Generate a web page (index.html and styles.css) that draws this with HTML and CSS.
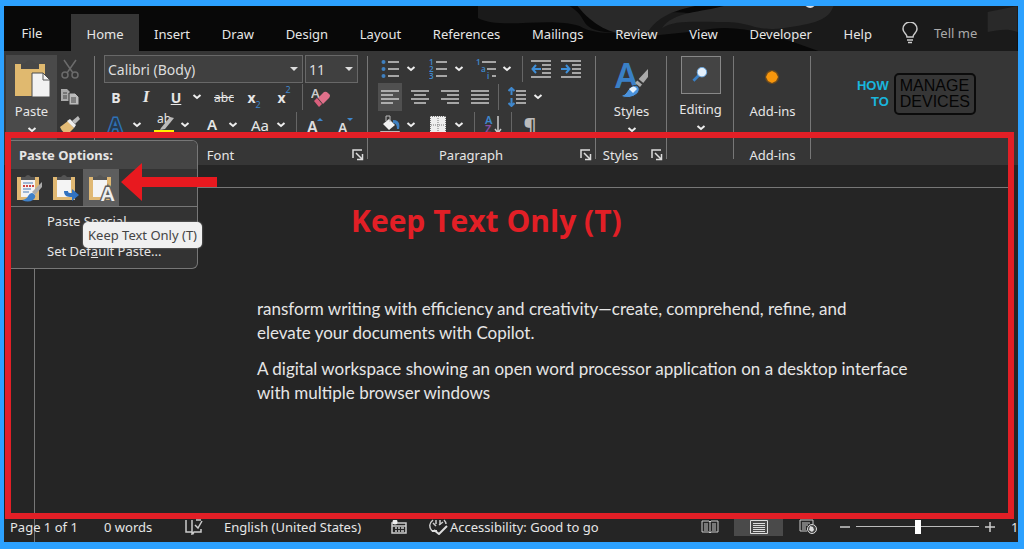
FILE: index.html
```
<!DOCTYPE html>
<html lang="en">
<head>
  <meta charset="UTF-8">
  <meta name="viewport" content="width=device-width, initial-scale=1.0">
  <title>Keep Text Only</title>
  <link rel="stylesheet" href="styles.css">
</head>
<body>
  <svg class="defs" width="0" height="0" aria-hidden="true">
    <symbol id="chev" viewBox="0 0 10 6"><path d="M1.5 1l3.5 3 3.5-3" fill="none" stroke="#eee" stroke-width="2"/></symbol>
    <symbol id="launch" viewBox="0 0 12 12"><path d="M1 9V1h9M4 4l6 6M10.500 5v5.500H5" fill="none" stroke="#ddd" stroke-width="1.500"/></symbol>
    <symbol id="clip" viewBox="0 0 28 28">
      <path d="M2 3h22v23H2z" fill="#e0b873"/><path d="M6 6h14v17H6z" fill="#f4f4f4"/><path d="M6 6V3h4q3-4 6 0h4v3z" fill="#555"/>
    </symbol>
  </svg>

  <div class="app">
    <header class="tabs">
      <svg class="art" viewBox="0 0 550 45" preserveAspectRatio="none" aria-hidden="true">
        <path d="M8 0h92c20 12 8 22 36 26 30 4 38-10 50-14 20-14 50 2 90 2 30 0 60-8 62-14h212v45H350c-40-14-80-30-120-20l-50 5c-20-6-50 2-70-10C80 10 30 24 8 12z" fill="#1a1a1a"/>
        <path d="M108 0h118c-30 6-40 16-46 24-20 10-50 4-72-24zM275 0h90c-4 14-20 18-50 22-30 4-30-6-60-6-30 0-50-2-62 6 10-16 40-16 62-22zM520 6l30-6v26c-10-4-20-2-30 0z" fill="#292929"/>
        <path d="M337 0q5 4 9 0z" fill="#ddd"/>
      </svg>
      <button class="tab file">File</button>
      <button class="tab active">Home</button>
      <nav>
        <button class="tab">Insert</button>
        <button class="tab">Draw</button>
        <button class="tab">Design</button>
        <button class="tab">Layout</button>
        <button class="tab">References</button>
        <button class="tab">Mailings</button>
        <button class="tab">Review</button>
        <button class="tab">View</button>
        <button class="tab">Developer</button>
        <button class="tab">Help</button>
      </nav>
      <button class="tell">
        <svg width="16" height="22" viewBox="0 0 16 22"><path d="M5 15c0-3-4-4-4-8a7 7 0 0 1 14 0c0 4-4 5-4 8zM5 18h6M6 20.500h4" fill="none" stroke="#ccc" stroke-width="1.500"/></svg>
        <span>Tell me</span>
      </button>
    </header>

    <section class="ribbon">
      <div class="group clipboard">
        <button class="big paste">
          <svg width="36" height="38" viewBox="0 0 36 38"><path d="M1 4h30v32H1z" fill="#e0b96f"/><path d="M7 9V3h4q5-6 10 0h4v6z" fill="#474747"/><path d="M18 13h11l7 7v17H18z" fill="#f2f2f2" stroke="#4a4a4a"/><path d="M29 13v7h7" fill="none" stroke="#555"/></svg>
          <span>Paste</span>
          <svg width="10" height="6"><use href="#chev"/></svg>
        </button>
        <div class="side">
          <button class="btn" aria-label="Cut"><svg width="18" height="20" viewBox="0 0 18 20" fill="none" stroke="#6b6b6b" stroke-width="1.500"><path d="M3 1l9 13M15 1L6 14"/><circle cx="4" cy="16" r="3"/><circle cx="14" cy="16" r="3"/></svg></button>
          <button class="btn" aria-label="Copy"><svg width="18" height="16" viewBox="0 0 18 16"><path d="M0 0h6l3 3v9H0z" fill="#aaa"/><path d="M8 4h6l4 4v8H8z" fill="#bbb" stroke="#363636"/><path d="M2 4h4M2 7h4M2 9h4M10 9h5M10 11h5M10 13h5" stroke="#444"/></svg></button>
          <button class="btn" aria-label="Format Painter"><svg width="20" height="18" viewBox="0 0 20 18"><path d="M0 11l8-6 6 7-6 6q-5 0-8-7z" fill="#e3bb76"/><path d="M7 5l3-2 6 6-2 3z" fill="#eee"/><path d="M12 5l6-5 2 3-5 5z" fill="#bbb"/></svg></button>
        </div>
      </div>

      <div class="group font">
        <div class="row">
          <div class="combo wide"><select aria-label="Font"><option>Calibri (Body)</option></select></div>
          <div class="combo"><select aria-label="Font size"><option>11</option></select></div>
        </div>
        <div class="row">
          <button class="btn"><b>B</b></button>
          <button class="btn italic">I</button>
          <div class="split"><button class="btn"><b><u>U</u></b></button><button class="drop" aria-label="Underline options"><svg width="10" height="6"><use href="#chev"/></svg></button></div>
          <button class="btn strike">abc</button>
          <button class="btn"><b>x</b><sub>2</sub></button>
          <button class="btn"><b>x</b><sup>2</sup></button>
          <i class="sep"></i>
          <button class="btn" aria-label="Clear formatting"><svg width="20" height="20" viewBox="0 0 20 20"><text x="0" y="11" class="glyph" font-size="13" fill="#ccc">A</text><path d="M7 11l6-6q2-1 4 1l2 2q0 2-1 3l-6 6z" fill="#e0708a"/><path d="M3 14l3-3 5 6-3 3z" fill="#d95f7c"/></svg></button>
        </div>
        <div class="row">
          <div class="split"><button class="btn" aria-label="Text effects"><svg width="20" height="20" viewBox="0 0 20 20"><text x="3" y="17" class="glyph" font-size="19" fill="#26394d" stroke="#2f71b5" stroke-width="3" paint-order="stroke">A</text></svg></button><button class="drop" aria-label="Text effect options"><svg width="10" height="6"><use href="#chev"/></svg></button></div>
          <div class="split"><button class="btn mark">ab<svg width="20" height="18" viewBox="0 0 20 18"><path d="M7 12l9-11 4 1-9 11-5 1z" fill="#bbb"/><path d="M0 14h20v3H0z" fill="#fff000"/></svg></button><button class="drop" aria-label="Highlight options"><svg width="10" height="6"><use href="#chev"/></svg></button></div>
          <div class="split"><button class="btn color">A</button><button class="drop" aria-label="Font color options"><svg width="10" height="6"><use href="#chev"/></svg></button></div>
          <div class="split"><button class="btn case">Aa</button><button class="drop" aria-label="Case options"><svg width="10" height="6"><use href="#chev"/></svg></button></div>
          <i class="sep"></i>
          <button class="btn" aria-label="Grow font"><svg width="20" height="20" viewBox="0 0 20 20"><text x="2" y="18" class="glyph" font-size="16" fill="#ddd">A</text><path d="M12 6l3-3 3 3z" fill="#3f87cc"/></svg></button>
          <button class="btn" aria-label="Shrink font"><svg width="20" height="20" viewBox="0 0 20 20"><text x="3" y="18" class="glyph" font-size="14" fill="#ddd">A</text><path d="M12 3h6l-3 3z" fill="#3f87cc"/></svg></button>
        </div>
        <div class="label"><span>Font</span><button class="more" aria-label="Font settings"><svg width="12" height="12"><use href="#launch"/></svg></button></div>
      </div>

      <div class="group paragraph">
        <div class="row">
          <div class="split"><button class="btn" aria-label="Bullets"><svg width="18" height="20" viewBox="0 0 18 20"><path d="M7 3h11M7 10h11M7 17h11" stroke="#ccc" stroke-width="1.500"/><g fill="#3f80c0"><circle cx="2.500" cy="3" r="2"/><circle cx="2.500" cy="10" r="2"/><circle cx="2.500" cy="17" r="2"/></g></svg></button><button class="drop" aria-label="Bullet options"><svg width="10" height="6"><use href="#chev"/></svg></button></div>
          <div class="split"><button class="btn" aria-label="Numbering"><svg width="18" height="20" viewBox="0 0 18 20"><path d="M7 3h11M7 10h11M7 17h11" stroke="#ccc" stroke-width="1.500"/><g class="glyph" font-size="8" fill="#3f87cc"><text x="0" y="6">1</text><text x="0" y="13">2</text><text x="0" y="20">3</text></g></svg></button><button class="drop" aria-label="Numbering options"><svg width="10" height="6"><use href="#chev"/></svg></button></div>
          <div class="split"><button class="btn" aria-label="Multilevel list"><svg width="20" height="20" viewBox="0 0 20 20"><path d="M6 3h14M11 10h9M16 17h4" stroke="#ccc" stroke-width="1.500"/><g class="glyph" font-size="8" fill="#3f87cc"><text x="0" y="6">1</text><text x="5" y="13">a</text><text x="11" y="20">i</text></g></svg></button><button class="drop" aria-label="Multilevel options"><svg width="10" height="6"><use href="#chev"/></svg></button></div>
          <i class="sep"></i>
          <button class="btn" aria-label="Decrease indent"><svg width="20" height="18" viewBox="0 0 20 18"><path d="M0 1h20M11 5h9M11 9h9M11 13h9M0 17h20" stroke="#ccc" stroke-width="1.500"/><path d="M10 9H2M5 5L1.500 9 5 13" fill="none" stroke="#3f8fd8" stroke-width="2"/></svg></button>
          <button class="btn" aria-label="Increase indent"><svg width="20" height="18" viewBox="0 0 20 18"><path d="M0 1h20M11 5h9M11 9h9M11 13h9M0 17h20" stroke="#ccc" stroke-width="1.500"/><path d="M0 9h8M5 5l3.500 4L5 13" fill="none" stroke="#3f8fd8" stroke-width="2"/></svg></button>
        </div>
        <div class="row">
          <button class="btn on" aria-label="Align left"><svg width="18" height="14" viewBox="0 0 18 14"><path d="M0 1h18M0 5h12M0 9h18M0 13h12" stroke="#ccc" stroke-width="1.500"/></svg></button>
          <button class="btn" aria-label="Center"><svg width="18" height="14" viewBox="0 0 18 14"><path d="M0 1h18M3 5h12M0 9h18M3 13h12" stroke="#ccc" stroke-width="1.500"/></svg></button>
          <button class="btn" aria-label="Align right"><svg width="18" height="14" viewBox="0 0 18 14"><path d="M0 1h18M6 5h12M0 9h18M6 13h12" stroke="#ccc" stroke-width="1.500"/></svg></button>
          <button class="btn" aria-label="Justify"><svg width="18" height="14" viewBox="0 0 18 14"><path d="M0 1h18M0 5h18M0 9h18M0 13h18" stroke="#ccc" stroke-width="1.500"/></svg></button>
          <i class="sep"></i>
          <div class="split"><button class="btn" aria-label="Line spacing"><svg width="18" height="20" viewBox="0 0 18 20"><path d="M8 4h10M8 8h10M8 12h10M8 16h10" stroke="#ccc" stroke-width="1.500"/><path d="M3.500 1v7M.500 4l3-3 3 3M3.500 11v8M.500 16l3 3 3-3" fill="none" stroke="#3f87cc" stroke-width="2"/></svg></button><button class="drop" aria-label="Spacing options"><svg width="10" height="6"><use href="#chev"/></svg></button></div>
        </div>
        <div class="row">
          <div class="split"><button class="btn" aria-label="Shading"><svg width="20" height="20" viewBox="0 0 20 20"><path d="M3 9l6-5 6 6-6 5z" fill="#f2f2f2"/><path d="M6 6V1h4v6" fill="none" stroke="#bbb"/><path d="M13 5q8 0 6 9h-2q0-6-4-6z" fill="#3f80c0"/><path d="M.500 19v-2.500h19V19" fill="none" stroke="#bbb"/></svg></button><button class="drop" aria-label="Shading options"><svg width="10" height="6"><use href="#chev"/></svg></button></div>
          <div class="split"><button class="btn" aria-label="Borders"><svg width="16" height="18" viewBox="0 0 16 18"><path d="M0 0h16v18H0z" fill="#eee"/><path d="M0 .500h16M.500 0v18M15.500 0v18M8 2v14M1 9h14" stroke="#777" stroke-dasharray="1 1"/></svg></button><button class="drop" aria-label="Border options"><svg width="10" height="6"><use href="#chev"/></svg></button></div>
          <i class="sep"></i>
          <button class="btn" aria-label="Sort"><svg width="18" height="20" viewBox="0 0 18 20"><text x="1" y="9" class="glyph" font-size="11" fill="#3f87cc">A</text><text x="1" y="18" class="glyph" font-size="11" fill="#8a4fa8">Z</text><path d="M14 1v16M11 14l3 4 3-4" fill="none" stroke="#ccc" stroke-width="1.500"/></svg></button>
          <i class="sep"></i>
          <button class="btn pilcrow" aria-label="Show marks">¶</button>
        </div>
        <div class="label"><span>Paragraph</span><button class="more" aria-label="Paragraph settings"><svg width="12" height="12"><use href="#launch"/></svg></button></div>
      </div>

      <div class="group styles">
        <button class="big">
          <svg width="36" height="38" viewBox="0 0 36 38"><text x="1" y="28" class="glyph" font-size="34" fill="#3a80c6">A</text><path d="M34 9v8l-8 10-5-4z" fill="#aaa"/><path d="M23 19l6 5" stroke="#363636" stroke-width="2"/><path d="M6 36q6-1 8-6 4-6 10-4 3 4-1 8-7 6-17 2z" fill="#4a92dc" stroke="#363636"/><path d="M15 29q5-5 8 0l-4 4z" fill="#e6f1fc"/></svg>
          <span>Styles</span>
          <svg width="10" height="6"><use href="#chev"/></svg>
        </button>
        <div class="label"><span>Styles</span><button class="more" aria-label="Style settings"><svg width="12" height="12"><use href="#launch"/></svg></button></div>
      </div>

      <div class="group editing">
        <button class="big">
          <svg class="find" width="40" height="38" viewBox="0 0 40 38"><path d="M12 25l7-7" stroke="#3a80c6" stroke-width="3"/><circle cx="21" cy="16" r="5" fill="#e4f0fc" stroke="#6aa6df" stroke-width="1"/></svg>
          <span>Editing</span>
          <svg width="10" height="6"><use href="#chev"/></svg>
        </button>
      </div>

      <div class="group addins">
        <button class="big">
          <svg width="36" height="38" viewBox="0 0 36 38"><circle cx="17" cy="17" r="7" fill="#6b4a1e"/><path d="M17 11l4 2 2 4-2 4-4 2-4-2-2-4 2-4z" fill="#f7960c"/></svg>
          <span>Add-ins</span>
        </button>
        <div class="label"><span>Add-ins</span></div>
      </div>

      <div class="logo">
        <div class="howto">HOW<br>TO</div>
        <div class="devices">MANAGE<br>DEVICES</div>
      </div>
    </section>

    <main class="workspace">
      <article class="page">
        <p>ransform writing with efficiency and creativity—create, comprehend, refine, and<br>elevate your documents with Copilot.</p>
        <p>A digital workspace showing an open word processor application on a desktop interface with multiple browser windows</p>
      </article>

      <footer class="status">
        <span class="pages">Page 1 of 1</span>
        <span class="words">0 words</span>
        <svg class="proof" width="18" height="16" viewBox="0 0 18 16"><path d="M7 13H1V1M7 1v14l2-2h7v-3M7 13l2 2M10 6l3 3 4-7M11 1h5" fill="none" stroke="#ccc" stroke-width="1.500"/></svg>
        <span class="lang">English (United States)</span>
        <svg class="macro" width="16" height="14" viewBox="0 0 16 14"><path d="M1 3h14v10H1zM1 6h14M4 8h2M7 8h2M10 8h3M4 11h2M7 11h2M10 11h3" fill="none" stroke="#ccc" stroke-width="1.500"/><circle cx="4" cy="2" r="2.500" fill="#eee"/></svg>
        <svg class="access" width="20" height="16" viewBox="0 0 20 16"><path d="M5 1Q-1 6 4 12M8 1v4M5 4l3 3M12 1v5M15 3l-4 3M16 1q2 2 2 4" fill="none" stroke="#ccc" stroke-width="1.500"/><path d="M6 11l5 4 8-8M4 12h5" fill="none" stroke="#ddd" stroke-width="2"/></svg>
        <span>Accessibility: Good to go</span>
        <div class="views">
          <button aria-label="Read mode"><svg width="18" height="14" viewBox="0 0 18 14"><path d="M1 1h7l1 1 1-1h7v11h-7l-1 1-1-1H1zM9 2v11M3 4h4M3 6h4M3 8h4M3 10h4M11 4h4M11 6h4M11 8h4M11 10h4" fill="none" stroke="#ccc"/></svg></button>
          <button class="on" aria-label="Print layout"><svg width="18" height="16" viewBox="0 0 18 16"><path d="M.500 1.500h17v13H.500zM3 4.500h12M3 6.500h12M3 8.500h12M3 10.500h12M3 12.500h12" fill="none" stroke="#ddd"/></svg></button>
          <button aria-label="Web layout"><svg width="18" height="16" viewBox="0 0 18 16"><path d="M8 12H1V1h13v4M3 4h8M3 6h6M3 8h4M3 10h4" fill="none" stroke="#ccc"/><circle cx="13" cy="10" r="4.500" fill="#444" stroke="#ddd"/><path d="M11 7l3 1 1 3-2 2-3-2z" fill="#ddd"/></svg></button>
        </div>
        <button class="zoom-btn" aria-label="Zoom out"><svg width="10" height="10" viewBox="0 0 10 10"><path d="M0 5h10" stroke="#ccc" stroke-width="1.500"/></svg></button>
        <input class="zoom" type="range" aria-label="Zoom" value="50">
        <button class="zoom-btn" aria-label="Zoom in"><svg width="10" height="10" viewBox="0 0 10 10"><path d="M0 5h10M5 0v10" stroke="#ccc" stroke-width="1.500"/></svg></button>
        <span class="percent">1</span>
      </footer>
    </main>

    <div class="frame"></div>

    <div class="menu">
      <h2>Paste Options:</h2>
      <div class="options">
        <button aria-label="Keep Source Formatting"><svg width="28" height="28"><use href="#clip"/><path d="M8 9h10M8 15h8M8 18h6" stroke="#4a7cb5"/><path d="M8 12h11" stroke="#c44" stroke-width="2" stroke-dasharray="2 1"/><path d="M27 8l-10 10 3 3 7-8z" fill="#aaa"/><path d="M7 26q5-1 6-4 3-5 6-2 3 3-1 6-5 3-11 0z" fill="#3f80c8"/></svg></button>
        <button aria-label="Merge Formatting"><svg width="28" height="28"><use href="#clip"/><path d="M13 17c0 5 3 6 8 6v4l7-6-7-6v4c-3 0-4 0-4-2z" fill="#3272c0"/></svg></button>
        <button class="on" aria-label="Keep Text Only"><svg width="28" height="28"><use href="#clip"/><text x="14" y="27" class="glyph" font-size="20" fill="#eee" stroke="#5e5e5e" stroke-width="3" paint-order="stroke">A</text></svg></button>
      </div>
      <button class="item">Paste Special...</button>
      <button class="item">Set Def<u>a</u>ult Paste...</button>
    </div>
    <div class="tooltip" role="tooltip">Keep Text Only (T)</div>
    <svg class="arrow" width="96" height="40" viewBox="0 0 96 40" aria-hidden="true"><path d="M0 20L21 1v14h75v10H21v14z" fill="#e8191f"/></svg>
    <div class="callout">Keep Text Only (T)</div>
  </div>
</body>
</html>
```
FILE: styles.css
```
* {
  box-sizing: border-box;
}
body {
  margin: 0;
  height: 100vh;
  padding: 6px 6px 7px 4px;
  background: #2ca1ff;
  color: #e6e6e6;
  font-family: "Noto Sans", "Open Sans", sans-serif;
  font-size: 13px;
}
button {
  padding: 0;
  border: 0;
  background: none;
  color: inherit;
  font: inherit;
}
svg {
  display: block;
  flex: none;
}
.defs {
  position: absolute;
}
.glyph {
  font-family: "Noto Sans", sans-serif;
  font-weight: 600;
}
.app {
  position: relative;
  display: flex;
  flex-direction: column;
  height: 100%;
  overflow: hidden;
  background: #252525;
}

/* tab strip */
.tabs {
  position: relative;
  display: flex;
  height: 45px;
  padding-top: 8px;
  background: #080808;
}
.art {
  position: absolute;
  top: 0;
  right: 0;
  width: 54%;
  height: 45px;
}
.tab {
  position: relative;
  padding-top: 2px;
  white-space: nowrap;
}
.file {
  width: 56px;
  margin-right: 11px;
  padding: 0;
}
.active {
  width: 68px;
  background: #363636;
}
.tabs nav {
  flex: 1;
  display: flex;
  justify-content: space-between;
  padding: 0 30px 0 15px;
}
.tell {
  position: relative;
  display: flex;
  align-items: center;
  gap: 16px;
  width: 116px;
  color: #aaa;
}

/* ribbon */
.ribbon {
  display: flex;
  height: 114px;
  padding: 4px 0 0 2px;
  background: #363636;
}
.group {
  position: relative;
  display: flex;
  flex-direction: column;
  flex: none;
}
.group::after {
  content: "";
  position: absolute;
  top: 1px;
  right: 0;
  width: 1px;
  height: 103px;
  background: #777;
}
.clipboard {
  flex-direction: row;
  width: 89px;
}
.font {
  width: 273px;
}
.paragraph {
  width: 228px;
}
.styles {
  width: 71px;
}
.editing {
  width: 67px;
}
.addins {
  width: 77px;
}
.row {
  display: flex;
  align-items: center;
  gap: 6px;
  height: 28px;
  padding-left: 9px;
}
.paragraph .row {
  padding-left: 10px;
}
.font .row:first-child {
  gap: 2px;
}
.btn {
  position: relative;
  display: flex;
  align-items: center;
  justify-content: center;
  width: 24px;
  height: 28px;
  font-size: 14px;
}
.btn.on {
  background: #505050;
}
.split {
  display: flex;
}
.drop {
  display: flex;
  align-items: center;
  justify-content: center;
  width: 18px;
}
.sep {
  width: 1px;
  height: 26px;
  background: #666;
}
.italic {
  font-family: "Liberation Serif", serif;
  font-size: 17px;
  font-style: italic;
  font-weight: bold;
}
.strike {
  font-size: 12px;
  text-decoration: line-through;
}
.btn sub,
.btn sup {
  align-self: flex-end;
  color: #3f87cc;
  font-size: 9px;
}
.btn sup {
  align-self: flex-start;
}
.mark {
  align-items: flex-start;
  font-size: 12px;
  line-height: 16px;
}
.mark svg {
  position: absolute;
  top: 5px;
  left: 2px;
}
.color {
  height: 22px;
  border-bottom: 3px solid #e00;
  font-size: 15px;
  font-weight: 600;
}
.case {
  font-size: 15px;
}
.pilcrow {
  color: #bbb;
  font-size: 20px;
  font-weight: 600;
}
.combo {
  position: relative;
  width: 53px;
}
.combo.wide {
  width: 199px;
}
.combo select {
  display: block;
  width: 100%;
  height: 28px;
  padding: 0 3px;
  appearance: none;
  border: 1px solid #686868;
  border-radius: 0;
  background: #404040;
  color: #ddd;
  font: inherit;
  font-size: 14px;
}
.combo::after {
  content: "";
  position: absolute;
  top: 12px;
  right: 5px;
  border: 4px solid transparent;
  border-top-color: #ddd;
}
.big {
  display: flex;
  flex-direction: column;
  align-items: center;
  height: 84px;
  padding-top: 5px;
}
.big span {
  height: 18px;
  margin: 4px 0 7px;
  line-height: 18px;
}
.paste {
  width: 51px;
  height: 100%;
  background: #4a4a4a;
}
.side {
  padding-left: 1px;
}
.editing .big {
  padding-top: 1px;
}
.editing .big span {
  margin-top: 6px;
}
.find {
  border: 1px solid #888;
  background: #444;
}
.label {
  display: flex;
  align-items: center;
  flex: 1;
  padding-top: 5px;
  text-align: center;
}
.label span {
  flex: 1;
}
.more {
  width: 22px;
  padding-left: 6px;
}
.logo {
  display: flex;
  align-items: center;
  gap: 5px;
  height: 78px;
  margin-left: auto;
  margin-right: 42px;
  font-family: "Liberation Sans", sans-serif;
  line-height: 16px;
}
.howto {
  color: #19b5dd;
  font-size: 13px;
  font-weight: bold;
  text-align: right;
}
.devices {
  padding: 3px 4px;
  border: 2px solid #0b0b0b;
  border-radius: 5px;
  color: #050505;
  font-size: 16px;
}

/* document */
.workspace {
  position: relative;
  display: flex;
  flex-direction: column;
  flex: 1;
}
.workspace::before {
  content: "";
  position: absolute;
  top: 22px;
  bottom: 0;
  left: 30px;
  width: 1px;
  background: #777;
}
.page {
  flex: 1;
  margin: 22px 9px 0 30px;
  padding: 109px 98px 0 223px;
  border-top: 1px solid #777;
  font-family: Lato, sans-serif;
  font-size: 17px;
  line-height: 24px;
}
.page p {
  margin: 0 0 12px;
}

/* status bar */
.status {
  position: relative;
  display: flex;
  align-items: center;
  height: 28px;
  padding-left: 6px;
  padding-bottom: 3px;
  overflow: hidden;
  white-space: nowrap;
}
.pages {
  width: 94px;
}
.words {
  width: 81px;
}
.proof {
  margin-right: 21px;
}
.lang {
  width: 167px;
}
.macro {
  margin-right: 21px;
}
.access {
  margin-right: 2px;
}
.status .views {
  display: flex;
  margin-left: auto;
  margin-right: 8px;
}
.views button {
  display: flex;
  align-items: center;
  justify-content: center;
  width: 49px;
  height: 18px;
}
.views .on {
  background: #4a4a4a;
}
.zoom-btn {
  flex: none;
}
.zoom {
  width: 123px;
  height: 16px;
  margin: 0 6px;
  appearance: none;
  background: linear-gradient(#bbb, #bbb) center / 100% 1px no-repeat;
}
.zoom::-webkit-slider-thumb {
  appearance: none;
  width: 6px;
  height: 14px;
  background: #fff;
}
.percent {
  width: 7px;
  margin-left: 16px;
}

/* annotations and the open paste menu */
.frame {
  position: absolute;
  top: 126px;
  right: 4px;
  bottom: 23px;
  left: 1px;
  border: 6px solid #e21f26;
}
.menu {
  position: absolute;
  top: 134px;
  left: 7px;
  width: 187px;
  height: 129px;
  border: 1px solid #777;
  border-left: 0;
  border-radius: 0 6px 6px 0;
  background: #333;
  overflow: hidden;
}
.menu h2 {
  height: 28px;
  margin: 0;
  padding-left: 8px;
  background: #454545;
  font-size: 13px;
  line-height: 29px;
}
.options {
  display: flex;
  height: 38px;
  border-bottom: 1px solid #777;
}
.options button {
  display: flex;
  align-items: center;
  justify-content: center;
  width: 36px;
}
.options .on {
  background: #5e5e5e;
}
.item {
  display: block;
  height: 30px;
  padding-left: 36px;
  padding-bottom: 2px;
}
.tooltip {
  position: absolute;
  top: 216px;
  left: 79px;
  padding: 0 5px;
  border-radius: 5px;
  background: #f0f0f0;
  box-shadow: 0 0 2px #999;
  color: #444;
  line-height: 26px;
}
.arrow {
  position: absolute;
  top: 156px;
  left: 117px;
}
.callout {
  position: absolute;
  top: 195px;
  left: 347px;
  color: #e21f26;
  font-family: "Open Sans", sans-serif;
  font-size: 30px;
  font-weight: bold;
  line-height: 40px;
}
```
